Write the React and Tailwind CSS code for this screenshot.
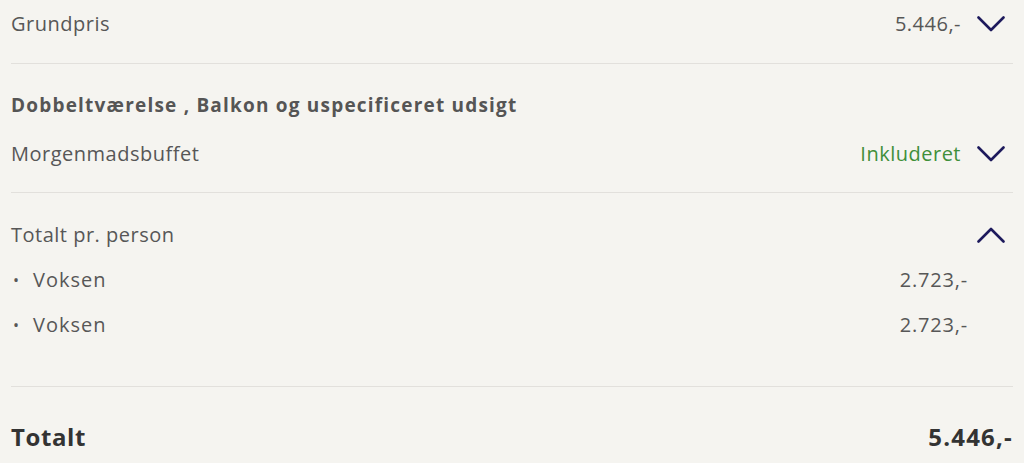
const adults = [
  { label: "Voksen", price: "2.723,-" },
  { label: "Voksen", price: "2.723,-" },
];

function Chevron({ up }) {
  return (
    <div className="flex w-[44px] justify-end pr-[8px]">
      <svg width="28" height="16" viewBox="0 0 28 16" fill="none" className="text-[#1d1a5c]">
        <polyline
          points={up ? "1.5,14.5 14,2 26.5,14.5" : "1.5,1.5 14,14 26.5,1.5"}
          stroke="currentColor"
          strokeWidth="2.6"
          strokeLinecap="round"
          strokeLinejoin="round"
        />
      </svg>
    </div>
  );
}

export default function App() {
  return (
    <div className="h-[463px] overflow-hidden bg-[#f5f4f0] px-[11px] font-['Open_Sans',sans-serif] text-[20px] tracking-[0.5px] text-[#575757]">
      <div className="flex h-[48px] items-center justify-between">
        <span>Grundpris</span>
        <div className="flex items-center gap-[8px]">
          <span>5.446,-</span>
          <Chevron />
        </div>
      </div>

      <div className="mt-[15px] border-t border-[#e2e0dc] pb-[14px] pt-[27px]">
        <h3 className="h-[28px] leading-[28px] text-[19px] font-bold tracking-[1.2px] text-[#555]">
          Dobbeltværelse , Balkon og uspecificeret udsigt
        </h3>
        <div className="mt-[11px] flex h-[48px] items-center justify-between">
          <span>Morgenmadsbuffet</span>
          <div className="flex items-center gap-[8px]">
            <span className="text-[#3f8f3a]">Inkluderet</span>
            <Chevron />
          </div>
        </div>
      </div>

      <div className="border-t border-[#e2e0dc] pb-[39px] pt-[19px]">
        <div className="flex h-[45px] items-center justify-between">
          <span>Totalt pr. person</span>
          <Chevron up />
        </div>
        {adults.map((a, i) => (
          <div key={i} className="flex h-[45px] items-center justify-between">
            <div className="flex items-center">
              <span className="w-[22px] pl-[2px] text-[16px]">•</span>
              <span className="tracking-[1px]">{a.label}</span>
            </div>
            <span className="pr-[45px] tracking-[0.8px]">{a.price}</span>
          </div>
        ))}
      </div>

      <div className="border-t border-[#e2e0dc] pt-[25px]">
        <div className="flex h-[50px] items-center justify-between text-[24px] font-bold tracking-[0.6px] text-[#333]">
          <span>Totalt</span>
          <span className="tracking-[1.2px]">5.446,-</span>
        </div>
      </div>
    </div>
  );
}
